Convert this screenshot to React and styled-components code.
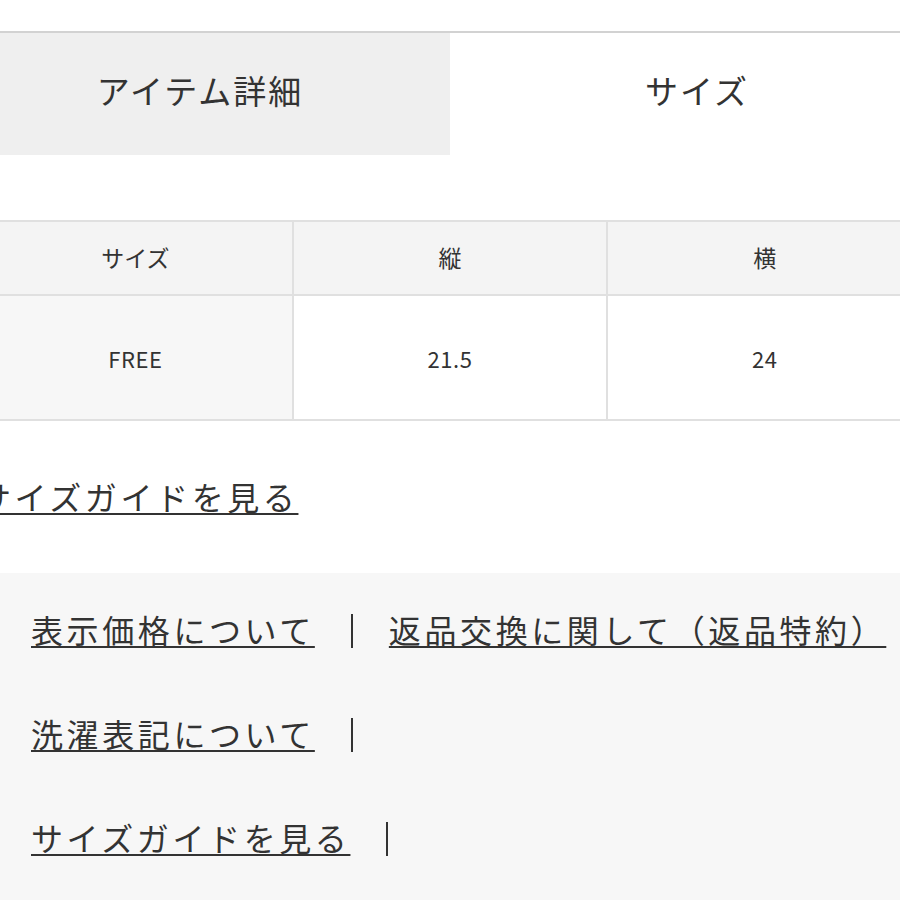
import React from "react";
import styled, { createGlobalStyle } from "styled-components";

const GlobalStyle = createGlobalStyle`
  html, body {
    margin: 0;
    padding: 0;
    background: #fff;
  }
  body {
    font-family: "Noto Sans CJK JP", "Noto Sans", sans-serif;
    color: #333;
    overflow: hidden;
  }
`;

const Page = styled.div`
  width: 900px;
  height: 900px;
  overflow: hidden;
  display: flex;
  flex-direction: column;
  padding-top: 31px;
  box-sizing: border-box;
`;

const TabBar = styled.div`
  display: grid;
  grid-template-columns: 450px 450px;
  border-top: 2px solid #d2d2d2;
`;

const Tab = styled.div`
  height: 122px;
  display: flex;
  align-items: center;
  justify-content: center;
  background: ${(p) => (p.$active ? "#efefef" : "#fff")};
  font-size: 33px;
  letter-spacing: 2px;
  color: #333;
  padding: ${(p) => (p.$active ? "0 50px 8px 0" : "0 0 8px 44px")};
  box-sizing: border-box;
`;

const SizeTable = styled.table`
  margin: 65px 0 0 -23px;
  width: 946px;
  table-layout: fixed;
  border-collapse: collapse;
  font-size: 22px;
  color: #333;
`;

const HeadCell = styled.th`
  height: 69px;
  padding: 0 0 3px;
  font-weight: 400;
  font-size: 23px;
  background: #f4f4f4;
  border: 2px solid #e0e0e0;
  text-align: center;
`;

const Cell = styled.td`
  height: 123px;
  padding: 0;
  background: ${(p) => (p.$label ? "#f7f7f7" : "#fff")};
  border: 2px solid #e0e0e0;
  text-align: center;
  letter-spacing: 0.5px;
`;

const Link = styled.a`
  flex-shrink: 0;
  color: #333;
  text-decoration: underline;
  text-decoration-thickness: 2px;
  text-underline-offset: 3px;
  cursor: pointer;
`;

const GuideLine = styled.div`
  margin: 53px 0 0 -21px;
  font-size: 32px;
  letter-spacing: 3.6px;
  line-height: 44px;
`;

const InfoBox = styled.div`
  margin-top: 55px;
  flex: 1;
  background: #f7f7f7;
  padding: 24px 0 0 31px;
  display: flex;
  flex-direction: column;
  gap: 40px;
  font-size: 32px;
  letter-spacing: 3.6px;
  line-height: 64px;
`;

const InfoRow = styled.div`
  display: flex;
  align-items: center;
  white-space: nowrap;
`;

const Divider = styled.span`
  flex-shrink: 0;
  display: inline-block;
  width: 2px;
  height: 34px;
  background: #333;
  margin: 4px 36px 0 36px;
`;

const headers = ["サイズ", "縦", "横"];
const rows = [["FREE", "21.5", "24"]];
const infoRows = [
  ["表示価格について", "返品交換に関して（返品特約）"],
  ["洗濯表記について"],
  ["サイズガイドを見る"],
];

export default function App() {
  return (
    <>
      <GlobalStyle />
      <Page>
        <TabBar>
          <Tab $active>アイテム詳細</Tab>
          <Tab>サイズ</Tab>
        </TabBar>

        <SizeTable>
          <thead>
            <tr>
              {headers.map((h) => (
                <HeadCell key={h}>{h}</HeadCell>
              ))}
            </tr>
          </thead>
          <tbody>
            {rows.map((r) => (
              <tr key={r[0]}>
                {r.map((v, i) => (
                  <Cell key={i} $label={i === 0}>
                    {v}
                  </Cell>
                ))}
              </tr>
            ))}
          </tbody>
        </SizeTable>

        <GuideLine>
          <Link>サイズガイドを見る</Link>
        </GuideLine>

        <InfoBox>
          {infoRows.map((row, ri) => (
            <InfoRow key={ri}>
              {row.map((t) => (
                <React.Fragment key={t}>
                  <Link>{t}</Link>
                  <Divider />
                </React.Fragment>
              ))}
            </InfoRow>
          ))}
        </InfoBox>
      </Page>
    </>
  );
}
